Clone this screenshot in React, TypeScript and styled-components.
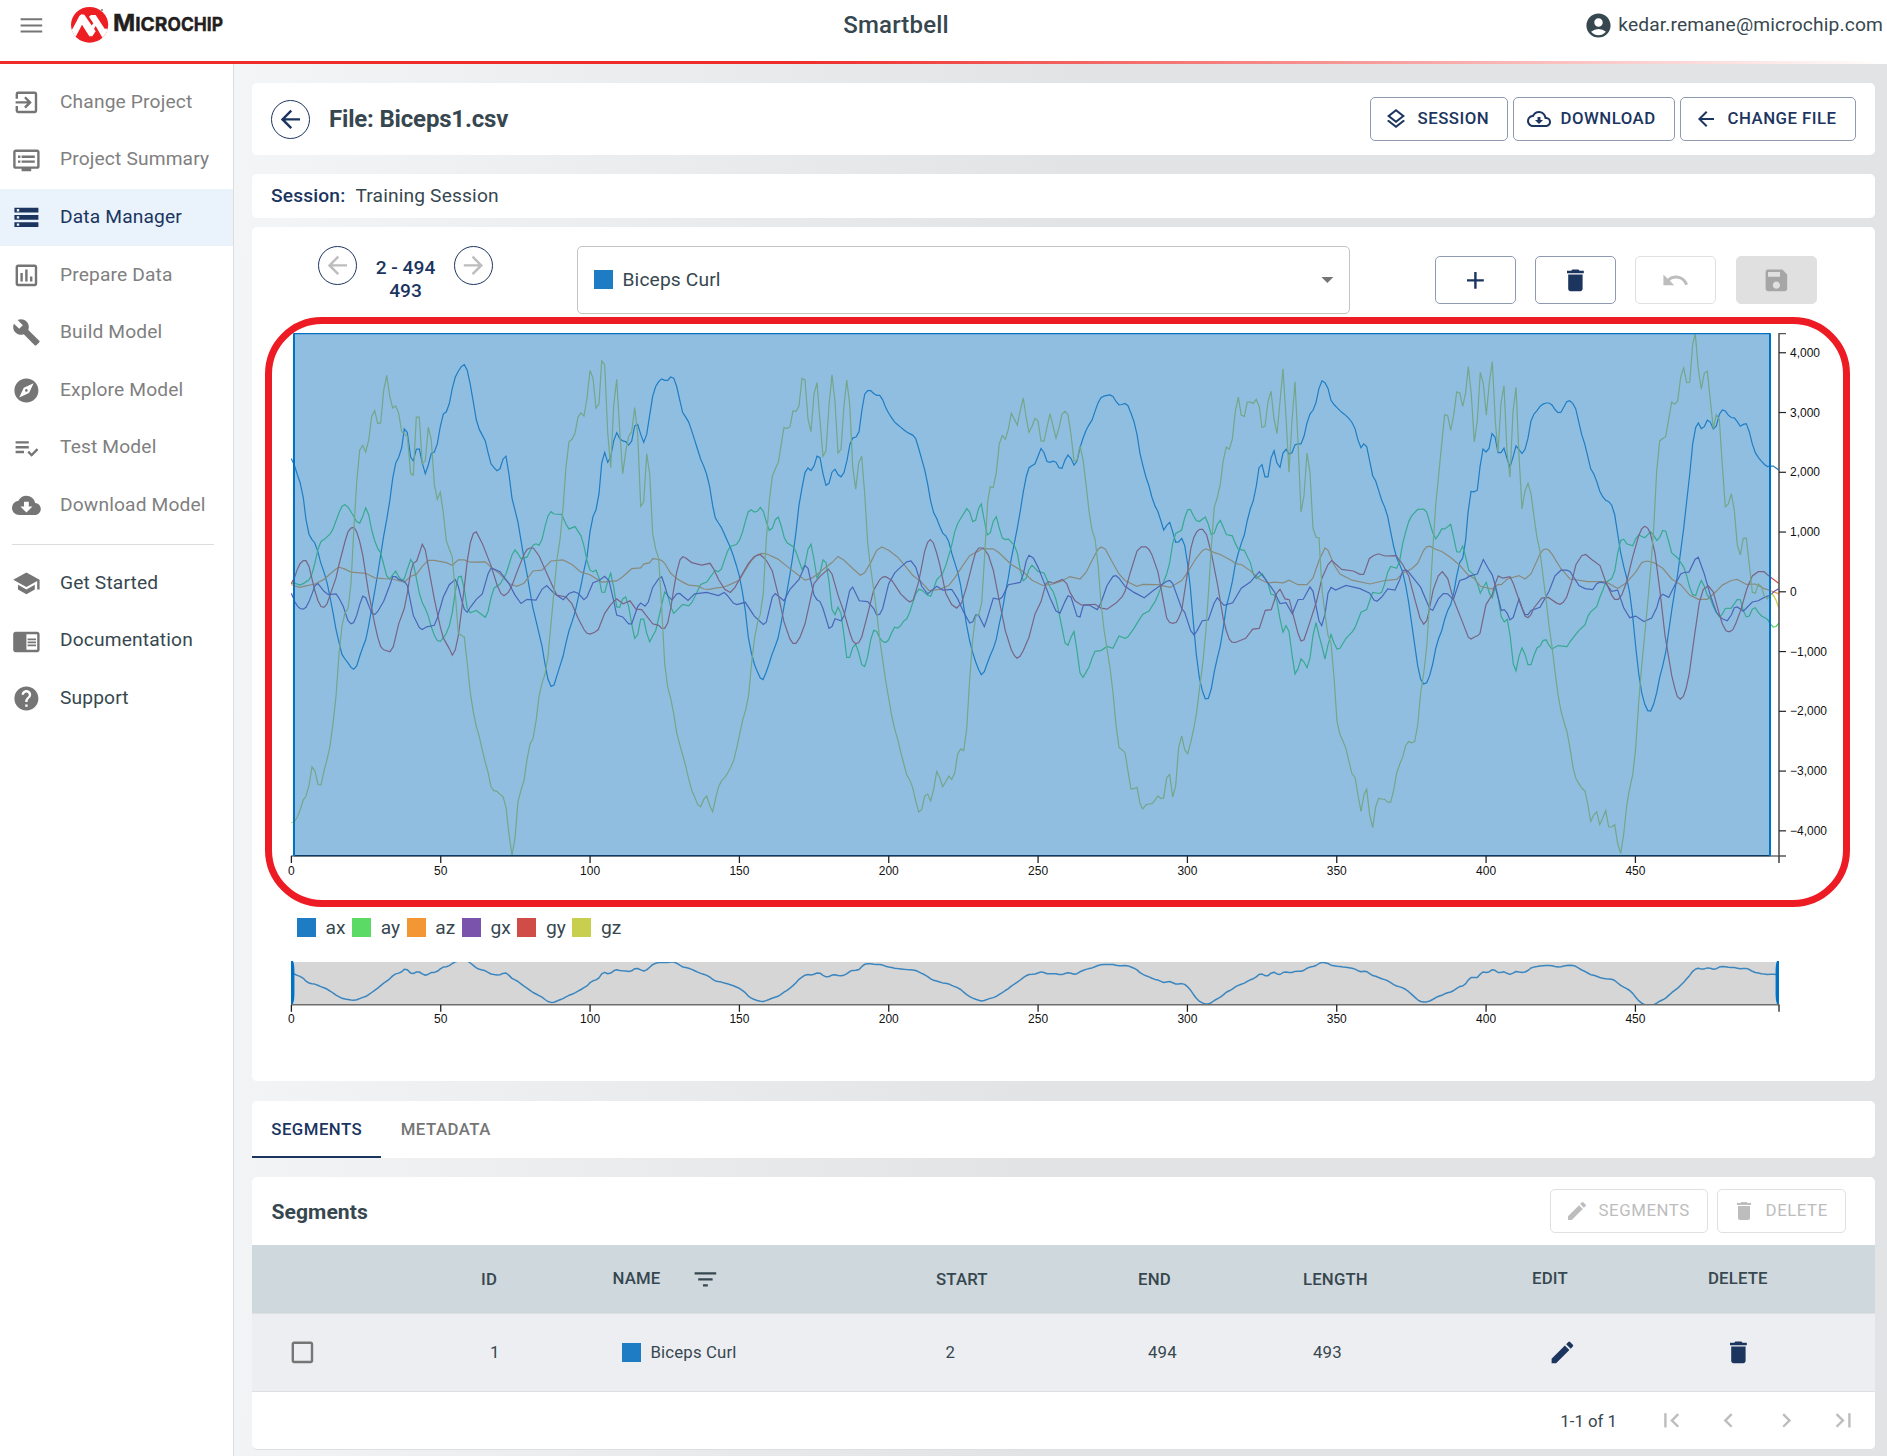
import React from 'react';
import styled, { createGlobalStyle, css } from 'styled-components';
import {
  MdExitToApp,
  MdOutlineDvr,
  MdStorage,
  MdOutlineAssessment,
  MdBuild,
  MdExplore,
  MdPlaylistAddCheck,
  MdCloudDownload,
  MdSchool,
  MdChromeReaderMode,
  MdHelp,
  MdArrowBack,
  MdArrowForward,
  MdOutlineLayers,
  MdOutlineCloudDownload,
  MdAdd,
  MdDelete,
  MdUndo,
  MdSave,
  MdEdit,
  MdFilterList,
  MdFirstPage,
  MdLastPage,
  MdChevronLeft,
  MdChevronRight,
  MdArrowDropDown,
  MdAccountCircle,
  MdCheckBoxOutlineBlank,
} from 'react-icons/md';

const navy = '#1b355f';
const ink = '#37474f';

const GlobalStyle = createGlobalStyle`
  *, *::before, *::after { box-sizing: border-box; }
  body {
    margin: 0;
    font-family: Roboto, "Liberation Sans", sans-serif;
    font-size: 19.2px;
    line-height: 23px;
    letter-spacing: 0.15px;
    color: ${ink};
    background: #fff;
    overflow: hidden;
  }
  button { font: inherit; letter-spacing: inherit; }
  svg { display: block; flex: none; }
`;

/* ---------- frame ---------- */

const Page = styled.div`
  display: flex;
  flex-direction: column;
  height: 1456px;
  width: 1887px;
`;

const Header = styled.header`
  display: grid;
  grid-template-columns: 1fr auto 1fr;
  height: 61px;
  padding: 0 4px 11px 17px;
  align-items: center;
  flex: none;
`;

const HeaderRule = styled.div`
  height: 3px;
  flex: none;
  background: linear-gradient(90deg, #ee2d2a 0, #ee2d2a 42%, #fff 100%);
`;

const Brand = styled.div`
  display: flex;
  align-items: center;
  gap: 22.5px;
`;

const AppTitle = styled.h1`
  margin: 0;
  font-size: 24px;
  font-weight: 500;
  padding-right: 108px;
`;

const UserBox = styled.div`
  display: flex;
  align-items: center;
  justify-content: flex-end;
  gap: 5px;
  white-space: nowrap;
  span { margin-bottom: 2px; }
`;

const Body = styled.div`
  display: flex;
  flex: 1;
  min-height: 0;
`;

const Sidebar = styled.nav`
  width: 234px;
  flex: none;
  border-right: 1px solid #dcdddf;
  padding-top: 9.6px;
  background: #fff;
`;

const NavItem = styled.a<{ $active?: boolean; $dark?: boolean }>`
  display: flex;
  align-items: center;
  height: 57.6px;
  padding: 0 0 0 12px;
  gap: 19.2px;
  white-space: nowrap;
  color: ${(p) => (p.$active ? navy : p.$dark ? ink : '#808080')};
  background: ${(p) => (p.$active ? '#eaf3fb' : 'transparent')};
  svg { color: ${(p) => (p.$active ? navy : '#757575')}; }
  span { margin-bottom: 2px; }
`;

const NavDivider = styled.hr`
  border: 0;
  height: 1px;
  margin: 9.6px 19px 9.6px 12px;
  background: #dcdcdc;
`;

const Main = styled.main`
  flex: 1;
  min-width: 0;
  padding: 19px 12px 0 18px;
  background: linear-gradient(93deg, #f4f5f7 0, #e2e3e5 50%);
`;

const Card = styled.section<{ $h: number; $mt?: number }>`
  height: ${(p) => p.$h}px;
  margin-top: ${(p) => p.$mt ?? 0}px;
  background: #fff;
  border-radius: 5px;
`;

/* ---------- title card ---------- */

const TitleRow = styled(Card)`
  display: flex;
  align-items: center;
  padding: 0 19px;
`;

const FileTitle = styled.h2`
  margin: 0 auto 0 19px;
  font-size: 24px;
  font-weight: 700;
  letter-spacing: -0.18px;
`;

const RoundButton = styled.button<{ $muted?: boolean }>`
  width: 39px;
  height: 39px;
  padding: 0;
  border: 1.2px solid ${navy};
  border-radius: 50%;
  background: transparent;
  color: ${(p) => (p.$muted ? '#bdbdbd' : navy)};
  display: grid;
  place-items: center;
`;

const OutlineButton = styled.button<{ $w: number; $off?: boolean }>`
  display: inline-flex;
  align-items: center;
  width: ${(p) => p.$w}px;
  height: 44px;
  padding: 0 0 1px 13px;
  gap: 9.6px;
  font-size: 16.8px;
  font-weight: 500;
  letter-spacing: 0.48px;
  white-space: nowrap;
  border-radius: 5px;
  background: #fff;
  border: 1px solid #8d9aaf;
  color: ${navy};
  ${(p) =>
    p.$off &&
    css`
      padding-left: 14px;
      border-color: #e0e0e0;
      color: #bdbdbd;
      font-weight: 400;
      letter-spacing: 0.55px;
    `}
`;

const ButtonGroup = styled.div<{ $gap: number }>`
  display: flex;
  gap: ${(p) => p.$gap}px;
`;

const SessionRow = styled(Card)`
  display: flex;
  align-items: center;
  padding: 0 19px 2px;
  gap: 10px;
  strong {
    font-weight: 500;
    color: ${navy};
  }
`;

/* ---------- chart card ---------- */

const ChartCard = styled(Card)`
  position: relative;
`;

const Toolbar = styled.div`
  display: flex;
  height: 106px;
  padding-top: 19px;
`;

const Stepper = styled.div`
  display: flex;
  justify-content: space-between;
  width: 175px;
  margin-left: 66px;
`;

const RangeText = styled.div`
  padding-top: 10px;
  color: ${navy};
  font-weight: 500;
  text-align: center;
  letter-spacing: 0;
`;

const SelectBox = styled.div`
  display: flex;
  align-items: center;
  width: 773px;
  height: 68px;
  margin-left: 84px;
  padding: 0 7px 1px 16px;
  border: 1px solid #c4c4c4;
  border-radius: 5px;
  svg { margin-left: auto; color: #757575; }
`;

const Swatch = styled.span<{ $color: string }>`
  width: 19px;
  height: 19px;
  flex: none;
  background: ${(p) => p.$color};
  margin-right: 9.5px;
`;

const ToolGroup = styled.div`
  display: flex;
  gap: 19.2px;
  margin: 10px 0 0 85px;
`;

const ToolButton = styled.button<{ $kind?: 'off' | 'filled' }>`
  width: 81px;
  height: 48px;
  padding: 0;
  display: grid;
  place-items: center;
  border-radius: 5px;
  border: 1px solid ${(p) => (p.$kind ? '#e0e0e0' : '#8d9aaf')};
  background: ${(p) => (p.$kind === 'filled' ? '#e0e0e0' : '#fff')};
  color: ${(p) => (p.$kind === 'filled' ? '#a6a6a6' : p.$kind ? '#bdbdbd' : navy)};
`;

const Highlight = styled.div`
  position: absolute;
  left: 13px;
  top: 90px;
  width: 1585px;
  height: 590px;
  border: 7px solid #ed1c24;
  border-radius: 57px;
  pointer-events: none;
`;

const Legend = styled.div`
  display: flex;
  align-items: center;
  height: 23px;
  margin: 27px 0 21px 45px;
`;

const LegendItem = styled.span`
  display: flex;
  align-items: center;
  margin-right: 6.4px;
`;

const AxisLabel = styled.text`
  font: 12px "Liberation Sans", Arial, sans-serif;
  letter-spacing: 0;
  fill: #111;
`;

/* ---------- tabs ---------- */

const Tabs = styled(Card)`
  display: flex;
  align-items: stretch;
`;

const Tab = styled.button<{ $on?: boolean }>`
  border: 0;
  background: transparent;
  padding: 2px 19.3px 0;
  font-size: 16.8px;
  font-weight: 500;
  letter-spacing: 0.46px;
  color: ${(p) => (p.$on ? navy : '#757575')};
  border-bottom: 2px solid ${(p) => (p.$on ? navy : 'transparent')};
`;

/* ---------- table ---------- */

const CardHead = styled.div`
  display: flex;
  align-items: center;
  justify-content: space-between;
  height: 68px;
  padding: 0 29px 0 19.5px;
  h3 {
    margin: 0;
    font-size: 21.1px;
    font-weight: 700;
    letter-spacing: 0.05px;
  }
`;

const TableRow = styled.div<{ $head?: boolean }>`
  display: grid;
  grid-template-columns: 220px 122px 323px 202px 165px 212px 206px 173px;
  align-items: center;
  height: ${(p) => (p.$head ? 69 : 78)}px;
  font-size: 16.8px;
  font-weight: ${(p) => (p.$head ? 500 : 400)};
  background: ${(p) => (p.$head ? '#cfd8dd' : '#edeef2')};
  border-bottom: 1px solid #dddfe1;
`;

const Cell = styled.div<{ $pl?: number; $up?: boolean }>`
  display: flex;
  align-items: center;
  padding-left: ${(p) => p.$pl ?? 0}px;
  ${(p) => p.$up && 'padding-bottom: 2px;'}
`;

const FilterIcon = styled(MdFilterList)`
  margin-left: 31px;
`;

const Pager = styled.div`
  display: flex;
  align-items: center;
  justify-content: flex-end;
  height: 58px;
  padding-right: 17px;
  font-size: 16.8px;
  letter-spacing: 0;
  border-bottom: 1px solid #dddfe1;
  border-radius: 0 0 5px 5px;
  span { margin-top: 2px; }
  svg { color: #bdbdbd; margin-left: 28.6px; }
  svg:first-of-type { margin-left: 40px; }
`;

/* ---------- signal data ---------- */

// Each channel is recorded in four consecutive windows; x runs in thirds of a
// pixel from the window start, y in units of 1/2.6133 pixel below the origin.
const WINDOW_START = [250, 660, 1070, 1470];
const Y_ORIGIN = 310;
const Y_UNIT = 1568 / 600;

const AX = [
  '124,388 134,408 142,430 150,450 160,490 168,548 177,586 186,600 194,608 203,630 212,660 222,685 232,715 240,750 250,795 258,835 268,872 276,900 285,912 294,922 303,934 311,939 320,930 329,905 338,882 347,862 355,830 365,780 374,735 383,690 392,640 401,590 410,548 419,500 428,440 437,400 446,385 455,360 463,311 472,320 482,385 490,394 499,364 508,363 517,400 526,428 535,405 544,375 553,371 562,350 571,305 580,272 589,266 598,245 607,205 616,175 625,160 634,148 643,143 652,158 661,195 670,240 679,287 688,312 697,327 706,342 714,372 723,402 732,412 741,420 750,415 759,390 768,382 777,430 786,492 795,523 804,555 813,602 822,650 831,690 840,735 849,780 858,812 867,845 876,878 885,925 894,965 903,984 912,980 921,955 930,930 939,905 948,870 957,838 966,815 975,790 984,755 993,720 1002,680 1011,645 1020,580 1029,540 1038,522 1047,480 1055,400 1064,372 1073,398 1082,385 1091,342 1100,321 1109,336 1118,342 1127,344 1136,353 1145,342 1154,303 1163,299 1172,325 1181,346 1190,325 1199,275 1208,225 1217,200 1226,187 1235,180',
  '14,184 23,184 32,175 41,178 50,200 59,235 68,268 77,280 86,293 95,316 104,340 113,365 122,390 131,408 140,430 149,462 158,512 166,543 175,556 184,568 193,585 202,603 211,620 220,642 229,667 238,695 247,735 256,785 265,855 274,895 283,925 292,945 301,962 309,966 318,948 327,925 336,900 345,880 354,858 363,820 372,775 381,735 390,690 399,640 408,580 417,510 426,465 435,425 444,413 453,420 462,408 471,382 480,386 489,428 498,458 507,453 516,424 525,416 534,430 543,436 552,425 561,393 570,350 579,334 588,332 597,318 606,260 614,220 623,211 632,211 641,218 650,223 659,223 668,235 677,255 686,270 695,282 704,293 713,300 722,306 731,313 740,319 749,323 758,327 767,336 776,362 785,390 794,418 803,455 812,500 821,530 830,545 839,565 848,583 857,590 866,605 875,635 884,660 893,685 902,720 911,775 920,825 929,865 938,895 947,920 956,940 964,953 973,945 982,923 991,902 1000,885 1009,860 1018,820 1027,785 1036,740 1045,700 1054,650 1063,610 1072,570 1081,525 1090,475 1099,435 1107,412 1116,407 1125,402 1134,382 1143,362 1152,373 1161,396 1170,398 1179,395 1188,398 1197,412 1206,414 1215,392 1224,379',
  '3,388 12,405 21,395 30,360 39,335 48,315 57,300 66,288 75,265 84,243 93,229 102,225 111,223 120,222 129,226 138,239 147,248 156,247 165,244 174,250 183,270 192,292 201,325 210,375 219,408 228,437 237,460 246,490 255,512 264,527 273,552 281,575 290,563 299,555 308,580 317,607 326,606 335,597 344,615 353,665 361,725 370,815 379,900 388,960 397,995 406,1016 415,1015 424,990 433,945 442,910 451,878 460,830 469,775 478,745 487,710 496,665 505,635 514,610 523,588 532,550 541,520 550,498 559,460 567,412 576,404 585,436 594,436 603,387 612,368 621,400 630,411 639,374 648,364 657,376 666,373 675,352 684,350 693,350 702,330 711,295 720,272 729,262 738,242 747,205 756,185 765,190 774,205 783,236 792,247 801,255 810,263 819,270 828,276 837,284 846,294 855,310 864,340 873,360 881,350 890,357 899,395 908,433 917,447 926,472 935,497 944,515 953,540 962,580 971,618 980,648 989,665 998,685 1007,720 1016,765 1025,820 1034,875 1043,930 1052,965 1061,977 1070,974 1079,955 1088,925 1097,885 1106,858 1115,838 1124,808 1133,785 1142,770 1151,740 1160,695 1169,660 1178,648 1187,600 1194,530',
  '3,474 12,475 22,471 30,410 39,363 48,371 57,362 66,323 75,332 84,373 93,373 102,361 111,388 120,410 129,385 138,355 147,365 156,375 165,364 174,335 183,290 192,272 201,263 210,252 219,246 228,243 237,243 246,248 255,260 264,268 273,267 282,253 290,240 299,237 308,244 317,258 326,292 335,326 344,350 353,382 362,415 371,428 380,448 389,473 398,488 407,497 416,501 425,510 434,535 443,585 452,635 461,670 470,700 479,740 488,800 497,880 506,950 515,1000 524,1030 533,1047 542,1048 551,1030 560,1000 569,960 578,930 587,895 596,840 605,785 614,735 623,690 632,630 641,570 650,500 659,430 668,350 677,307 685,295 694,310 703,305 712,288 721,293 730,311 739,303 748,273 757,261 766,264 775,275 784,281 793,282 802,292 811,304 820,299 829,297 838,318 847,350 856,373 865,385 874,395 883,403 892,409 901,408 910,408 918,413 927,419',
];

const AY = [
  '124,715 134,714 150,719 160,715 177,705 186,690 195,660 204,625 213,605 222,600 240,586 249,572 267,530 276,513 285,509 294,515 303,527 320,553 329,557 338,540 347,517 356,535 365,575 374,603 383,623 392,635 401,665 410,695 419,703 428,692 437,682 446,697 455,706 463,702 472,678 482,652 490,663 499,700 508,740 517,765 526,780 535,800 544,828 553,850 562,864 571,866 580,857 589,845 598,825 607,790 616,735 625,698 634,696 643,730 652,780 661,791 679,785 697,797 706,803 714,788 723,752 732,727 750,716 768,690 777,665 786,640 795,627 804,637 813,650 831,646 849,615 858,611 867,615 876,600 885,566 894,538 903,527 912,533 935,534 948,560 957,572 975,566 993,590 1002,617 1011,655 1020,680 1029,684 1038,680 1047,700 1055,737 1064,738 1073,710 1082,688 1091,725 1100,776 1109,777 1118,755 1127,750 1136,775 1145,820 1154,858 1163,848 1172,808 1181,808 1190,845 1199,867 1208,852 1217,838 1226,805',
  '5,770 14,737 23,745 32,775 41,793 50,785 68,769 86,773 95,765 104,750 113,733 122,717 140,711 149,700 166,680 175,684 184,677 193,655 202,632 211,618 229,613 238,602 247,582 256,553 265,527 274,522 283,528 292,526 301,516 310,526 319,553 328,576 337,570 346,548 355,541 364,565 373,595 382,609 399,618 408,632 417,655 426,678 435,665 444,625 453,612 462,652 471,700 480,687 489,653 498,660 507,710 516,783 525,796 534,777 543,793 552,850 560,908 569,908 578,882 587,874 596,895 605,927 614,932 623,905 632,862 641,837 650,840 659,857 668,866 677,869 686,862 695,843 704,829 713,831 722,825 731,813 740,807 749,790 758,765 767,742 776,730 785,732 803,745 812,748 821,728 830,705 839,697 848,688 857,668 866,642 875,615 884,580 893,558 902,545 920,519 929,528 938,553 947,549 956,518 964,507 973,550 982,588 991,582 1000,552 1009,540 1018,570 1027,596 1036,600 1045,598 1063,615 1072,635 1081,680 1090,708 1099,700 1107,678 1116,667 1134,683 1152,687 1161,705 1170,724 1179,735 1188,757 1197,792 1206,830 1215,870 1224,876',
  '3,855 12,840 21,890 30,948 39,960 48,947 57,933 66,910 75,892 93,890 111,879 129,884 138,868 147,852 165,858 174,854 192,832 210,806 219,795 237,787 255,762 264,745 273,725 281,710 290,690 299,660 308,610 317,584 335,575 344,543 353,522 361,521 370,537 379,550 388,553 406,541 415,560 424,587 433,583 442,560 451,550 460,567 469,587 487,590 496,610 505,625 523,628 541,660 550,690 559,702 577,690 594,715 603,743 612,744 621,762 630,807 639,842 648,825 657,840 666,900 675,951 684,938 693,912 702,920 711,935 720,910 729,850 738,817 747,850 756,880 765,912 774,875 783,848 792,870 801,886 810,884 828,858 846,842 855,830 873,790 890,783 899,760 908,738 926,741 935,738 944,715 953,685 962,670 980,675 989,655 998,610 1007,580 1016,553 1025,538 1043,521 1061,520 1070,528 1079,555 1088,582 1097,598 1106,587 1115,572 1124,572 1142,560 1151,595 1160,632 1169,633 1178,617 1187,645 1196,680',
  '3,685 12,692 22,715 31,740 40,724 49,712 58,740 67,752 76,725 85,755 94,802 103,815 112,808 121,855 130,925 138,943 147,905 156,883 165,900 174,927 183,927 192,902 201,883 210,878 219,864 228,862 237,876 246,886 264,877 291,880 300,867 318,847 327,837 345,823 354,800 362,789 380,775 389,752 398,733 407,712 425,702 434,682 443,635 452,602 461,599 470,611 488,616 497,598 506,588 524,595 542,580 551,589 560,602 569,594 578,576 587,578 596,605 605,635 623,648 641,672 650,695 659,725 668,744 677,746 685,725 694,707 703,722 712,745 721,755 730,775 739,790 748,802 757,795 766,780 784,779 802,756 811,757 820,785 829,802 838,800 847,782 856,778 865,790 874,799 892,808 901,820 910,829 918,827 927,818',
];

const AZ = [
  '124,718 134,721 150,725 168,721 195,716 222,704 240,690 258,677 267,672 285,677 303,685 347,688 374,700 400,702 428,703 463,712 482,696 499,691 517,670 535,654 553,654 589,660 607,667 625,653 643,653 661,659 706,658 723,672 750,690 777,715 800,722 822,714 849,682 876,680 903,656 939,653 966,665 993,685 1020,692 1055,711 1100,708 1118,697 1145,676 1172,674 1181,664 1199,660 1208,650 1228,652',
  '5,655 14,662 32,688 50,702 68,711 86,719 113,721 131,729 148,730 166,727 193,724 211,717 238,706 256,680 274,655 292,640 305,636 319,637 354,651 381,670 408,688 435,706 453,702 471,691 489,678 516,660 534,644 552,654 579,676 601,693 614,687 632,660 650,628 665,619 686,628 713,646 740,674 758,693 785,712 807,733 839,730 866,720 884,700 911,664 929,642 956,630 965,624 1000,624 1018,635 1054,665 1090,684 1116,706 1148,720 1179,716 1206,708 1224,699',
  '0,697 30,703 48,686 66,655 84,625 94,619 106,625 129,662 147,690 165,707 200,722 219,717 264,718 300,725 335,707 353,685 379,648 397,629 408,624 433,634 451,639 487,656 496,663 514,665 541,681 568,703 594,714 612,711 640,713 657,706 684,718 711,718 729,700 747,655 765,622 774,628 792,666 810,690 846,706 900,716 944,707 980,704 998,688 1025,676 1043,662 1061,628 1070,619 1079,617 1097,625 1115,631 1142,647 1169,667 1196,694',
  '0,695 12,701 31,722 66,729 84,717 94,718 112,703 147,694 165,703 183,690 210,638 219,627 228,624 237,628 246,638 273,676 300,703 354,710 407,710 443,728 470,712 497,685 515,660 531,656 551,660 578,675 605,703 632,718 659,745 685,756 712,756 739,735 757,719 784,707 802,704 829,717 856,716 883,728 901,733 912,737 927,742',
];

const GX = [
  '124,740 134,762 142,773 150,780 160,782 168,777 177,762 186,742 195,720 204,715 222,735 235,744 258,742 267,753 280,775 294,812 303,820 311,817 320,798 329,770 338,748 347,752 365,792 374,796 383,788 401,761 419,720 428,697 437,697 446,704 463,709 472,720 482,765 490,798 508,830 517,835 530,828 553,824 562,805 580,750 598,718 616,704 625,722 634,755 643,782 652,790 661,777 679,756 697,742 714,690 723,675 732,677 750,684 777,715 795,745 813,767 831,756 858,758 876,730 890,720 912,740 940,757 957,741 972,736 985,741 1002,757 1011,750 1029,713 1047,707 1064,696 1077,708 1091,760 1100,797 1118,802 1136,820 1145,820 1163,775 1172,766 1185,774 1195,763 1208,725 1226,702',
  '5,697 14,720 23,747 36,758 50,742 59,741 84,759 104,742 140,738 175,746 193,738 202,746 220,766 230,770 256,764 283,800 310,822 319,816 337,750 346,741 372,760 390,730 417,704 435,668 444,675 462,745 471,757 480,762 489,780 507,832 516,827 525,807 543,812 552,800 569,733 578,724 598,760 623,762 641,780 650,797 659,795 668,780 686,715 704,687 722,672 740,658 753,656 767,672 785,722 803,742 830,722 848,732 875,730 893,755 911,790 929,818 938,815 947,797 956,798 973,828 982,805 1000,753 1018,756 1027,750 1045,718 1081,712 1090,690 1099,655 1107,641 1120,648 1134,672 1152,712 1170,752 1188,787 1200,792 1215,762 1224,747',
  '3,750 21,800 30,802 40,772 57,771 82,783 93,765 111,720 129,696 138,694 147,701 165,722 192,738 223,752 250,733 290,709 299,707 308,715 335,780 344,790 362,838 372,849 380,840 397,812 415,810 432,767 442,752 462,772 488,765 514,727 541,711 568,684 585,702 612,735 630,767 648,765 667,794 684,757 700,756 720,724 729,735 747,812 755,825 765,795 774,740 783,725 797,732 828,720 870,728 899,740 912,758 921,761 935,750 953,729 975,732 989,705 998,682 1007,679 1016,685 1052,725 1079,780 1088,785 1105,755 1120,741 1133,742 1150,757 1169,707 1187,702',
  '0,695 22,690 40,652 58,680 67,692 76,720 94,785 103,783 112,793 120,810 130,803 147,755 156,778 165,796 174,796 183,785 210,777 237,735 255,695 273,680 290,680 300,683 327,720 345,728 368,731 380,715 390,711 407,714 425,735 443,732 461,778 479,804 497,800 522,814 545,805 560,778 569,750 578,743 596,751 614,720 632,690 642,686 657,685 675,652 685,646 703,690 721,745 739,790 757,807 772,812 784,797 793,778 802,776 820,787 847,763 865,760 883,751 901,745 912,736 927,728',
];

const GY = [
  '124,715 134,698 142,678 150,663 160,655 168,655 177,670 195,735 204,760 213,775 222,777 231,768 240,745 258,700 267,665 285,605 294,580 303,570 312,568 320,580 329,605 338,640 356,740 374,820 383,855 392,880 401,888 420,893 430,880 446,820 463,780 472,740 482,685 490,662 500,656 517,612 526,627 535,670 553,755 571,828 580,857 598,885 607,902 616,888 625,852 634,790 643,725 652,655 661,608 670,584 679,580 697,610 723,668 741,718 752,740 762,747 775,738 786,720 804,678 822,639 831,626 840,622 850,622 867,642 894,695 920,745 948,750 966,768 984,805 1002,835 1011,845 1020,847 1034,842 1045,835 1064,793 1082,770 1100,755 1120,768 1140,760 1158,782 1175,783 1190,800 1208,820 1226,824',
  '5,832 14,832 23,818 32,780 41,730 50,685 60,653 68,645 77,648 95,660 125,667 150,662 160,675 176,705 194,730 211,738 225,725 247,690 265,663 283,644 301,639 319,654 337,682 355,745 372,815 390,860 399,871 408,871 420,855 435,820 453,750 462,715 480,696 505,677 516,690 534,745 552,790 570,845 578,865 587,872 596,869 605,855 623,795 641,732 659,705 668,698 677,697 695,706 722,742 740,757 750,763 760,757 776,710 794,630 803,607 811,600 820,608 830,635 839,665 857,740 875,770 890,779 905,765 920,722 938,660 947,633 956,622 970,622 985,640 1000,680 1018,760 1036,838 1054,888 1063,903 1071,910 1080,905 1090,890 1107,855 1125,795 1143,762 1158,715 1167,710 1180,714 1207,704 1220,715',
  '0,738 15,760 34,771 75,769 93,779 111,782 138,766 156,750 165,735 183,680 201,630 214,619 228,619 237,626 246,640 264,685 281,765 290,805 299,817 308,819 319,816 326,805 335,785 350,700 362,625 371,595 380,580 389,573 398,573 410,588 425,640 443,720 460,808 469,838 478,860 486,868 496,869 527,858 548,834 568,832 586,785 604,783 620,740 630,730 645,755 658,757 675,815 684,845 693,865 702,862 720,815 740,760 756,700 774,665 785,655 815,678 850,682 870,691 881,691 898,650 910,642 925,637 945,643 978,642 998,665 1016,695 1034,755 1050,805 1061,821 1070,812 1075,795 1090,730 1105,695 1117,684 1133,702 1150,755 1178,817 1195,855',
  '3,860 15,854 24,851 30,845 48,770 66,745 76,715 85,695 98,701 120,697 130,715 150,765 165,800 174,804 183,796 192,778 215,753 235,751 260,766 270,769 280,764 290,750 305,710 318,665 335,642 347,639 365,652 390,668 407,710 425,745 434,756 445,756 455,745 470,710 488,645 506,590 515,572 524,565 533,570 541,583 555,635 570,735 585,850 605,955 615,990 622,1010 631,1017 640,1010 648,990 658,950 672,860 688,765 700,730 715,721 730,737 748,795 757,820 768,838 778,841 788,836 797,820 812,785 830,730 847,695 865,684 882,684 901,698 912,705 927,715',
];

const GZ = [
  '124,1340 134,1336 142,1325 150,1308 160,1280 168,1270 177,1242 186,1194 195,1205 204,1240 213,1241 222,1205 231,1175 240,1140 249,1080 258,1010 267,900 276,825 285,792 294,780 303,715 311,580 320,450 329,366 338,354 347,371 356,340 365,278 374,263 383,297 392,295 401,210 410,171 419,225 428,256 437,251 446,270 455,318 463,323 472,330 482,428 490,432 499,280 508,280 517,402 526,394 535,306 544,340 553,455 562,495 571,476 580,530 589,603 598,625 607,645 616,740 625,845 634,850 643,855 652,925 661,1000 670,1050 679,1088 688,1115 697,1150 706,1182 714,1208 723,1246 732,1256 741,1258 750,1266 759,1272 768,1300 777,1370 786,1425 795,1380 804,1285 813,1255 822,1230 831,1175 840,1135 849,1120 858,1075 867,1010 876,975 885,952 894,905 903,820 912,735 921,650 930,600 939,520 948,410 957,344 966,338 975,322 984,280 993,269 1002,277 1011,230 1020,158 1029,178 1038,256 1047,245 1055,133 1064,143 1073,320 1082,412 1091,250 1100,181 1109,315 1118,428 1127,370 1136,330 1145,318 1154,255 1163,325 1172,513 1181,502 1190,375 1199,430 1208,585 1217,625 1226,650',
  '5,780 14,925 23,985 32,1015 41,1055 50,1105 59,1135 68,1163 77,1192 86,1225 95,1255 104,1273 113,1292 122,1298 131,1279 140,1270 149,1295 158,1311 167,1275 176,1245 185,1230 194,1222 203,1210 212,1195 221,1177 230,1145 239,1108 248,1072 257,1045 266,1005 275,920 284,855 293,815 301,795 310,740 319,600 328,500 337,435 346,415 355,398 364,350 372,307 381,310 390,305 399,264 408,265 417,250 426,179 435,183 444,285 453,318 462,220 471,190 480,290 489,382 498,368 507,250 516,169 525,240 534,374 543,364 552,250 560,183 569,245 578,410 587,468 596,400 605,382 614,480 623,610 632,675 641,730 650,790 659,860 668,915 677,970 686,1015 695,1060 704,1095 713,1122 722,1155 731,1185 740,1215 749,1228 758,1248 767,1283 776,1312 785,1306 794,1270 803,1265 812,1283 821,1252 830,1206 839,1222 848,1246 857,1233 866,1218 875,1227 884,1210 893,1160 902,1147 911,1152 920,1095 929,965 938,860 947,800 956,797 965,765 974,640 983,500 991,462 1000,464 1009,425 1018,350 1027,328 1036,338 1045,312 1054,270 1063,285 1072,301 1081,262 1090,230 1098,278 1107,320 1116,304 1125,283 1134,290 1143,342 1152,343 1161,306 1170,271 1179,303 1188,335 1197,308 1206,272 1215,265 1224,274',
  '3,325 12,394 21,393 30,355 39,390 48,455 57,525 66,575 75,598 84,665 93,765 102,835 111,885 120,935 129,1000 138,1085 147,1143 156,1149 165,1157 174,1205 183,1252 192,1251 201,1247 210,1290 218,1304 228,1293 237,1291 246,1290 255,1281 264,1270 273,1277 281,1275 290,1222 299,1214 308,1273 317,1243 326,1142 335,1113 344,1149 353,1160 362,1130 371,1095 380,1050 389,985 398,925 407,845 416,730 424,620 433,515 442,490 451,455 460,393 469,358 478,364 487,338 496,265 505,228 514,275 523,278 532,241 541,241 550,244 559,233 568,253 576,307 585,304 594,240 603,212 612,285 621,323 630,240 639,154 648,280 657,424 666,290 675,188 684,345 693,528 702,485 711,374 720,425 729,570 738,594 747,595 756,730 765,795 774,850 783,870 792,960 801,1075 810,1110 819,1127 828,1147 837,1180 846,1212 855,1221 864,1268 873,1310 882,1267 890,1252 899,1320 908,1353 917,1298 926,1276 935,1278 944,1279 953,1286 962,1286 971,1255 980,1210 989,1187 998,1168 1007,1138 1016,1128 1025,1131 1034,1128 1043,1085 1052,1000 1061,950 1070,880 1079,760 1088,630 1097,510 1106,430 1115,350 1124,273 1133,276 1142,315 1151,275 1160,214 1169,217 1178,252 1187,215 1195,148',
  '4,220 13,345 22,290 31,163 40,192 49,275 58,190 67,135 76,290 84,372 93,243 102,198 111,370 120,437 129,265 138,202 147,380 156,520 165,473 174,453 183,480 192,540 201,595 210,630 219,695 228,755 237,825 246,880 255,945 264,1005 273,1048 282,1077 291,1102 300,1145 309,1195 318,1225 327,1238 336,1250 345,1257 354,1295 362,1337 371,1320 380,1311 389,1345 398,1328 407,1308 416,1351 425,1351 434,1345 443,1395 452,1420 461,1370 470,1295 479,1250 488,1215 497,1145 506,1025 515,930 524,850 533,765 542,675 551,570 560,420 569,342 578,336 587,331 596,285 605,241 614,246 623,238 632,175 641,151 650,190 659,189 668,90 676,62 685,155 694,207 703,165 712,160 721,235 730,310 739,274 748,285 757,405 766,514 775,507 784,480 793,523 802,615 811,640 820,597 829,596 838,665 847,738 856,740 865,716 874,722 883,748 892,755 901,742 910,745 918,758 927,780',
];

type Pt = [number, number];

const decode = (windows: string[]): Pt[] =>
  windows.flatMap((w, i) =>
    w.split(' ').map((pair) => {
      const [x, y] = pair.split(',').map(Number);
      return [x / 3 + WINDOW_START[i], y] as Pt;
    }),
  );

const linePath = (pts: Pt[], toY: (y: number) => number) =>
  pts.map(([x, y], i) => `${i ? 'L' : 'M'}${x.toFixed(1)} ${toY(y).toFixed(1)}`).join('');

const mainY = (y: number) => y / Y_UNIT + Y_ORIGIN;
const overviewY = (y: number) => 974.2 + (y - 405) * (y < 405 ? 0.0535 : 0.0487);

const channels = [
  { name: 'ax', color: '#1d7cc4', line: '#1d7cc4', data: AX },
  { name: 'ay', color: '#5bdb66', line: '#50d45c', data: AY },
  { name: 'az', color: '#f39634', line: '#f39634', data: AZ },
  { name: 'gx', color: '#7953ac', line: '#7350ac', data: GX },
  { name: 'gy', color: '#cf4c47', line: '#cf4c47', data: GY },
  { name: 'gz', color: '#c8ce4e', line: '#c8ce4e', data: GZ },
];

const xTicks = [0, 50, 100, 150, 200, 250, 300, 350, 400, 450];
const yTicks = [4000, 3000, 2000, 1000, 0, -1000, -2000, -3000, -4000];
const tickX = (v: number) => 291.4 + v * 2.9867;
const fmt = (v: number) => (v < 0 ? '\u2212' : '') + Math.abs(v).toLocaleString('en-US');

function XAxis({ y }: { y: number }) {
  return (
    <g>
      <path d={`M291 ${y}H1779.5`} stroke="#6e6e6e" strokeWidth="1.6" />
      <path d={`M1779 ${y}v7`} stroke="#333" strokeWidth="1.4" />
      {xTicks.map((v) => (
        <g key={v}>
          <path d={`M${tickX(v)} ${y}v7`} stroke="#222" strokeWidth="1.3" />
          <AxisLabel x={tickX(v)} y={y + 18.6} textAnchor="middle">
            {v}
          </AxisLabel>
        </g>
      ))}
    </g>
  );
}

function SignalChart() {
  return (
    <svg width="1623" height="556" viewBox="252 333 1623 556">
      <XAxis y={856} />
      {channels.map((c) => (
        <path
          key={c.name}
          d={linePath(decode(c.data), mainY)}
          fill="none"
          stroke={c.line}
          strokeWidth="1.2"
        />
      ))}
      <rect x="294" y="334" width="1476" height="522" fill="#1f7dc4" fillOpacity="0.5" />
      <path d="M294 333.7H1770" stroke="#0072c6" strokeWidth="1.2" />
      <path d="M294 855.6H1770" stroke="#0b3c66" strokeWidth="1.3" />
      <path d="M294 333.2V856M1770 333.2V856" stroke="#0072c6" strokeWidth="2" />
      <path d="M1786 333.5H1779V856H1786" fill="none" stroke="#555" strokeWidth="1.6" />
      {yTicks.map((v) => {
        const y = 591.8 - v * 0.05976;
        return (
          <g key={v}>
            <path d={`M1779 ${y}h7`} stroke="#222" strokeWidth="1.2" />
            <AxisLabel x="1790" y={y + 4}>
              {fmt(v)}
            </AxisLabel>
          </g>
        );
      })}
    </svg>
  );
}

function Overview() {
  return (
    <svg width="1623" height="70" viewBox="252 960 1623 70">
      <defs>
        <clipPath id="overview-plot">
          <rect x="291" y="962" width="1488" height="42.5" />
        </clipPath>
      </defs>
      <rect x="291" y="962" width="1488" height="42.5" fill="#d6d6d6" />
      <path
        d={linePath(decode(AX), overviewY)}
        clipPath="url(#overview-plot)"
        fill="none"
        stroke="#3b86bf"
        strokeWidth="1.5"
        strokeLinejoin="round"
      />
      <XAxis y={1004.8} />
      <path d="M291 961h2q1.4 3 1.4 10v24q0 6-1.4 9h-2z" fill="#0072c6" />
      <path d="M1779 961h-2q-1.4 3-1.4 10v24q0 6 1.4 9h2z" fill="#0072c6" />
    </svg>
  );
}

function Logo() {
  return (
    <svg width="156" height="40" viewBox="68 5 156 40">
      <defs>
        <clipPath id="brand-disc">
          <ellipse cx="88.6" cy="24.8" rx="18.6" ry="17.9" />
        </clipPath>
      </defs>
      <g clipPath="url(#brand-disc)">
        <rect x="68" y="5" width="42" height="40" fill="#ee1f23" />
        <g transform="translate(10 0) scale(0.33333)" fill="#fff">
          <path d="M176 98 L186 84 L205 48 L211 43 L220 44 L254 94 L244 109 L235 109 L213 74 L197 105 L188 120 L176 120Z" />
          <path d="M234 50 L240 45 L254 45 L281 86 L296 86 L296 108 L276 116 L254 78 L246 92 L238 82 L247 70Z" />
        </g>
      </g>
      <circle cx="101" cy="10" r="1" fill="#777" />
      <text
        x="112"
        y="31.2"
        textLength="54.5"
        lengthAdjust="spacingAndGlyphs"
        fontFamily="Inter, sans-serif"
        fontWeight="700"
        fontSize="19"
        letterSpacing="0"
        fill="#231f20"
        stroke="#231f20"
        strokeWidth="0.4"
      >
        <tspan fontSize="23.5">M</tspan>
        <tspan>ICR</tspan>
      </text>
      <text
        x="166.5"
        y="31.2"
        textLength="55.5"
        lengthAdjust="spacingAndGlyphs"
        fontFamily="Inter, sans-serif"
        fontWeight="700"
        fontSize="19"
        letterSpacing="0"
        fill="#231f20"
        stroke="#231f20"
        strokeWidth="0.4"
      >
        OCHIP
      </text>
    </svg>
  );
}

function MenuGlyph() {
  return (
    <svg width="29" height="29" viewBox="17 11 29 29">
      <path d="M20.6 19.2h21.6M20.6 25.4h21.6M20.6 31.6h21.6" stroke="#757575" strokeWidth="2" />
    </svg>
  );
}

const mainNav = [
  { label: 'Change Project', Icon: MdExitToApp },
  { label: 'Project Summary', Icon: MdOutlineDvr },
  { label: 'Data Manager', Icon: MdStorage, active: true },
  { label: 'Prepare Data', Icon: MdOutlineAssessment },
  { label: 'Build Model', Icon: MdBuild },
  { label: 'Explore Model', Icon: MdExplore },
  { label: 'Test Model', Icon: MdPlaylistAddCheck },
  { label: 'Download Model', Icon: MdCloudDownload },
];

const helpNav = [
  { label: 'Get Started', Icon: MdSchool },
  { label: 'Documentation', Icon: MdChromeReaderMode },
  { label: 'Support', Icon: MdHelp },
];

export default function App() {
  return (
    <Page>
      <GlobalStyle />
      <Header>
        <Brand>
          <MenuGlyph />
          <Logo />
        </Brand>
        <AppTitle>Smartbell</AppTitle>
        <UserBox>
          <MdAccountCircle size={29} />
          <span>kedar.remane@microchip.com</span>
        </UserBox>
      </Header>
      <HeaderRule />
      <Body>
        <Sidebar>
          {mainNav.map(({ label, Icon, active }) => (
            <NavItem key={label} $active={active}>
              <Icon size={28.8} />
              <span>{label}</span>
            </NavItem>
          ))}
          <NavDivider />
          {helpNav.map(({ label, Icon }) => (
            <NavItem key={label} $dark>
              <Icon size={28.8} />
              <span>{label}</span>
            </NavItem>
          ))}
        </Sidebar>
        <Main>
          <TitleRow $h={72}>
            <RoundButton>
              <MdArrowBack size={28.8} />
            </RoundButton>
            <FileTitle>File: Biceps1.csv</FileTitle>
            <ButtonGroup $gap={5}>
              <OutlineButton $w={138}>
                <MdOutlineLayers size={24} />
                SESSION
              </OutlineButton>
              <OutlineButton $w={162}>
                <MdOutlineCloudDownload size={24} />
                DOWNLOAD
              </OutlineButton>
              <OutlineButton $w={176}>
                <MdArrowBack size={24} />
                CHANGE FILE
              </OutlineButton>
            </ButtonGroup>
          </TitleRow>

          <SessionRow $h={44} $mt={19}>
            <strong>Session:</strong>
            <span>Training Session</span>
          </SessionRow>

          <ChartCard $h={854} $mt={9}>
            <Toolbar>
              <Stepper>
                <RoundButton $muted>
                  <MdArrowBack size={28.8} />
                </RoundButton>
                <RangeText>
                  2 - 494
                  <br />
                  493
                </RangeText>
                <RoundButton $muted>
                  <MdArrowForward size={28.8} />
                </RoundButton>
              </Stepper>
              <SelectBox>
                <Swatch $color="#1d7cc4" />
                Biceps Curl
                <MdArrowDropDown size={28.8} />
              </SelectBox>
              <ToolGroup>
                <ToolButton>
                  <MdAdd size={28.8} />
                </ToolButton>
                <ToolButton>
                  <MdDelete size={28.8} />
                </ToolButton>
                <ToolButton $kind="off">
                  <MdUndo size={28.8} />
                </ToolButton>
                <ToolButton $kind="filled">
                  <MdSave size={28.8} />
                </ToolButton>
              </ToolGroup>
            </Toolbar>
            <SignalChart />
            <Legend>
              {channels.map((c) => (
                <LegendItem key={c.name}>
                  <Swatch $color={c.color} />
                  {c.name}
                </LegendItem>
              ))}
            </Legend>
            <Overview />
            <Highlight />
          </ChartCard>

          <Tabs $h={57} $mt={20}>
            <Tab $on>SEGMENTS</Tab>
            <Tab>METADATA</Tab>
          </Tabs>

          <Card $h={273} $mt={19}>
            <CardHead>
              <h3>Segments</h3>
              <ButtonGroup $gap={9}>
                <OutlineButton $w={158} $off>
                  <MdEdit size={24} />
                  SEGMENTS
                </OutlineButton>
                <OutlineButton $w={129} $off>
                  <MdDelete size={24} />
                  DELETE
                </OutlineButton>
              </ButtonGroup>
            </CardHead>
            <TableRow $head>
              <Cell />
              <Cell $pl={9}>ID</Cell>
              <Cell $pl={18.5}>
                NAME
                <FilterIcon size={28.8} />
              </Cell>
              <Cell $pl={19}>START</Cell>
              <Cell $pl={19}>END</Cell>
              <Cell $pl={19}>LENGTH</Cell>
              <Cell $pl={36} $up>EDIT</Cell>
              <Cell $pl={6} $up>DELETE</Cell>
            </TableRow>
            <TableRow>
              <Cell $pl={36}>
                <MdCheckBoxOutlineBlank size={28.8} color="#757575" />
              </Cell>
              <Cell $pl={18}>1</Cell>
              <Cell $pl={28}>
                <Swatch $color="#1d7cc4" />
                Biceps Curl
              </Cell>
              <Cell $pl={28.5}>2</Cell>
              <Cell $pl={29}>494</Cell>
              <Cell $pl={29}>493</Cell>
              <Cell $pl={52}>
                <MdEdit size={28.8} color={navy} />
              </Cell>
              <Cell $pl={22}>
                <MdDelete size={28.8} color={navy} />
              </Cell>
            </TableRow>
            <Pager>
              <span>1-1 of 1</span>
              <MdFirstPage size={28.8} />
              <MdChevronLeft size={28.8} />
              <MdChevronRight size={28.8} />
              <MdLastPage size={28.8} />
            </Pager>
          </Card>
        </Main>
      </Body>
    </Page>
  );
}
